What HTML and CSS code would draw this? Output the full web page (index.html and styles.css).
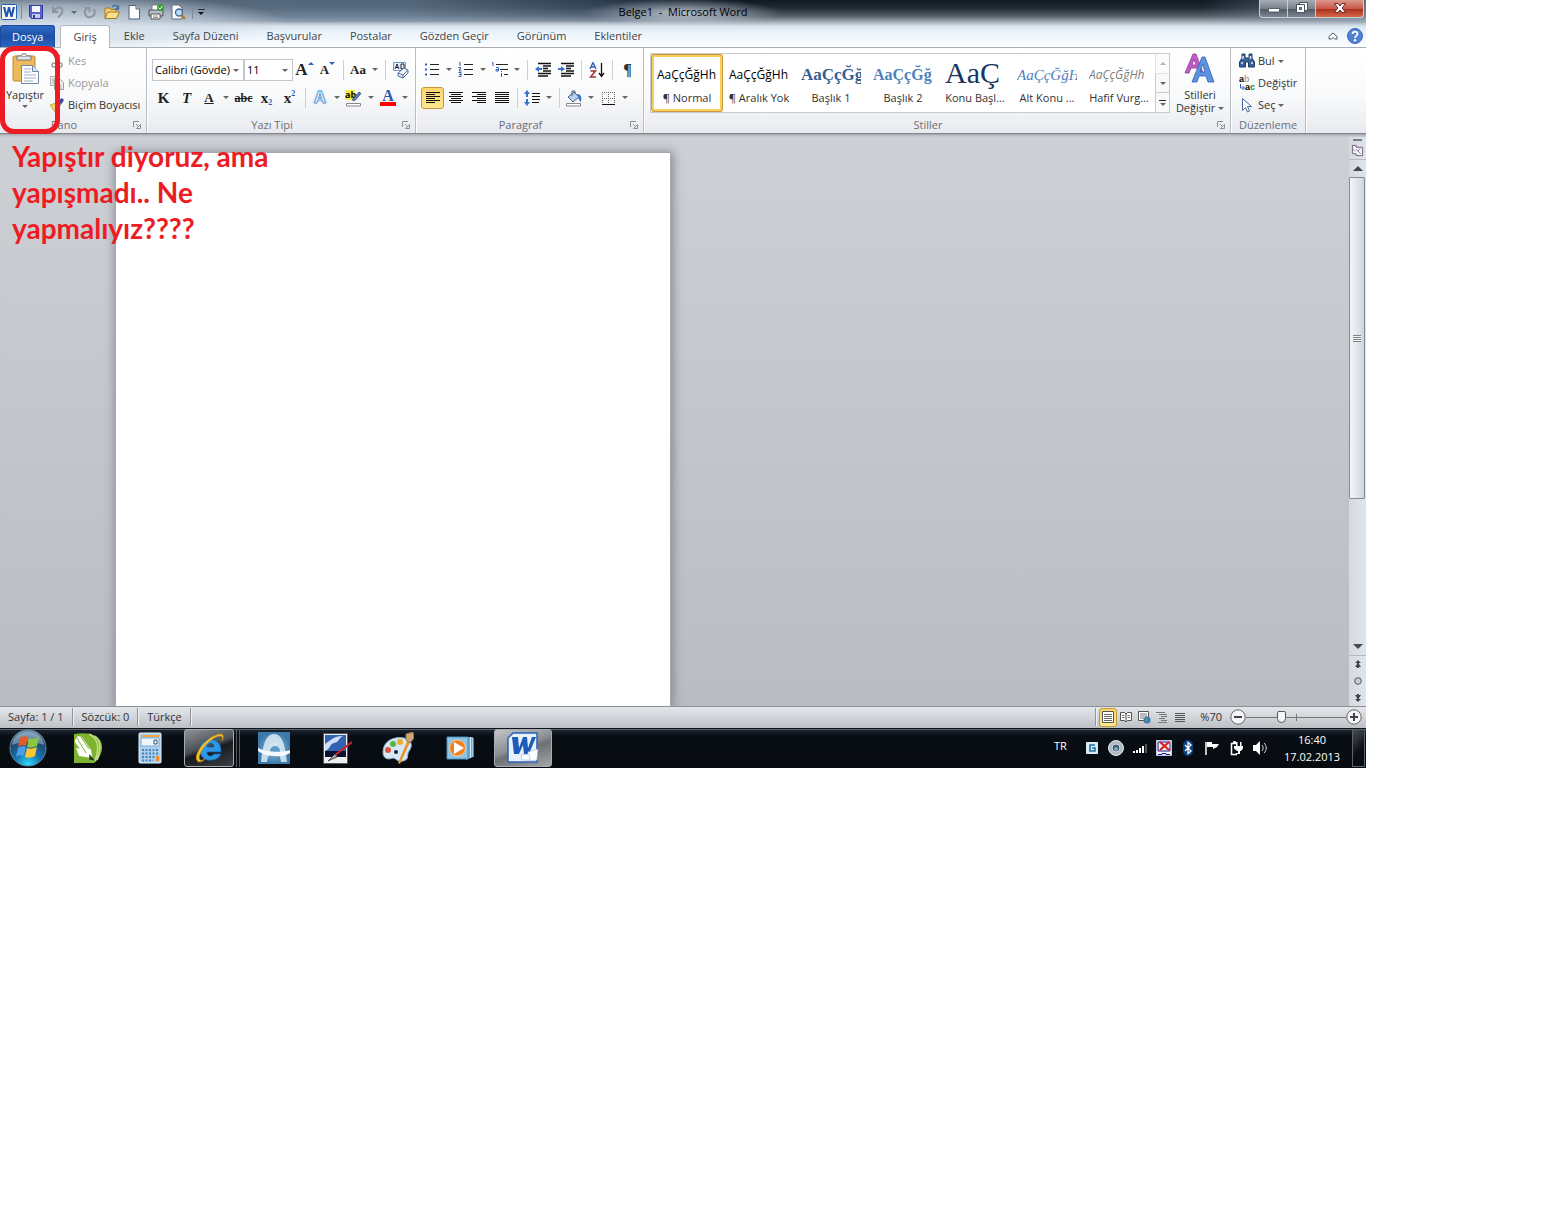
FILE: index.html
```html
<!DOCTYPE html>
<html lang="tr">
<head>
<meta charset="utf-8">
<title>Belge1 - Microsoft Word</title>
<link rel="stylesheet" href="styles.css">
</head>
<body>
<div class="desktop">
  <header class="chrome">
    <div class="titlebar">
      <div class="quick">
        <svg class="i18" viewBox="0 0 18 18"><rect x="1.500" y="1.500" width="15" height="15" rx="1" fill="#f4f8fd" stroke="#2a5ea8"/><path d="M3 4l2.500 10h2L9 8l1.500 6h2L15 4h-2.200l-1.400 6L10 4H8l-1.400 6L5.300 4z" fill="#1b57a8"/></svg>
        <span class="qsep"></span>
        <button class="qb" aria-label="Kaydet"><svg class="i16" viewBox="0 0 16 16"><path d="M1.500 1.500h13v13h-11l-2-2z" fill="#5b62c6" stroke="#333a9a"/><path d="M4 2h8v6H4z" fill="#f4f6ff"/><path d="M4 10h8v4H4z" fill="#c8cdf0"/><path d="M5 11h2v3H5z" fill="#333a9a"/></svg></button>
        <button class="qb" aria-label="Geri al"><svg class="i16" viewBox="0 0 16 16"><path d="M3 3v5h5M3.500 7.500C6 2.500 12 2.500 12.500 6.500c0 3-2 5-4.500 7" fill="none" stroke="#8b949e" stroke-width="2"/></svg></button>
        <button class="qarrow" aria-label="Geri al seçenekleri"><i class="arr"></i></button>
        <button class="qb" aria-label="Yinele"><svg class="i16" viewBox="0 0 16 16"><path d="M4.500 4.500A5 5 0 1 0 11.500 5M3 4h4.500v4" fill="none" stroke="#8b949e" stroke-width="2"/></svg></button>
        <button class="qb" aria-label="Aç"><svg class="i16" viewBox="0 0 16 16"><path d="M1 14V4h5l1 1.500h5V8" fill="#f3cd6b" stroke="#a87a1c"/><path d="M1 14.500L4 8h11.500l-3 6.500z" fill="#fbe08c" stroke="#a87a1c"/><path d="M8 3c2-2.500 5-2 6 1M14.500 1.500V5H11" fill="none" stroke="#3a68ac" stroke-width="1.300"/></svg></button>
        <button class="qb" aria-label="Yeni"><svg class="i16" viewBox="0 0 16 16"><path d="M3 1.500h7l3.500 3.500v10H3z" fill="#fff" stroke="#4c5f78"/><path d="M10 1.500V5h3.500" fill="#cdd8e6" stroke="#4c5f78"/></svg></button>
        <button class="qb" aria-label="Hızlı yazdır"><svg class="i16" viewBox="0 0 16 16"><path d="M4 1h7v6H4z" fill="#fff" stroke="#777"/><path d="M1 6h14v6H1z" fill="#b9bcc3" stroke="#4a4d54"/><path d="M3 10h9v5H3z" fill="#fff" stroke="#555"/><path d="M5 12h5M5 13.500h5" stroke="#999"/><circle cx="12.500" cy="3.500" r="3.500" fill="#35a035"/><path d="M10.500 3.500l1.500 1.500 2.500-3" fill="none" stroke="#fff"/></svg></button>
        <button class="qb" aria-label="Baskı önizleme"><svg class="i16" viewBox="0 0 16 16"><path d="M2 1h7l3 3v11H2z" fill="#fff" stroke="#5c6c80"/><circle cx="9" cy="8.500" r="3.500" fill="#b8dcf4" stroke="#3d6696" stroke-width="1.300"/><path d="M11.500 11l3.500 4" stroke="#b57a28" stroke-width="2.400"/></svg></button>
        <span class="qsep"></span>
        <button class="qarrow custom" aria-label="Özelleştir"><i class="bar"></i><i class="arr dark"></i></button>
      </div>
      <h1 class="title">Belge1 &nbsp;-&nbsp; Microsoft Word</h1>
      <div class="wincontrols">
        <button class="wc min" aria-label="Simge durumuna küçült"><svg viewBox="0 0 14 12"><rect x="1.500" y="6.500" width="11" height="3.500" fill="#fff" stroke="#59626d"/></svg></button>
        <button class="wc max" aria-label="Geri yükle"><svg viewBox="0 0 14 12"><path d="M4.500.5h8v8h-8z" fill="#fff" stroke="#4a525c"/><path d="M1.500 2.500h8v8h-8z" fill="#fff" stroke="#4a525c"/><path d="M4.500 5.500h2v2h-2z" fill="#8f99a5" stroke="#4a525c"/></svg></button>
        <button class="wc close" aria-label="Kapat"><svg viewBox="0 0 14 12"><path d="M1.500 1.500h3.500l2 2.500 2-2.500h3.500L9.200 6l3.300 4.500H9L7 8l-2 2.500H1.500L4.800 6z" fill="#fff" stroke="#6b2a26"/></svg></button>
      </div>
    </div>
    <nav class="tabs">
      <button class="tab file">Dosya</button>
      <button class="tab active">Giriş</button>
      <button class="tab">Ekle</button>
      <button class="tab">Sayfa Düzeni</button>
      <button class="tab">Başvurular</button>
      <button class="tab">Postalar</button>
      <button class="tab">Gözden Geçir</button>
      <button class="tab">Görünüm</button>
      <button class="tab">Eklentiler</button>
      <span class="grow"></span>
      <button class="qb" aria-label="Şeridi küçült"><svg class="i16" viewBox="0 0 16 16"><path d="M4 8.500L8 5l4 3.500v2.500H9.500L8 9.500 6.500 11H4z" fill="#fff" stroke="#4c5663"/></svg></button>
      <button class="qb" aria-label="Yardım"><svg class="i16" viewBox="0 0 16 16"><circle cx="8" cy="8" r="7.500" fill="#4f82d0" stroke="#3a68b5"/><path d="M5.500 6C5.500 2.800 10.500 2.800 10.500 6 10.500 7.800 8 8 8 10" fill="none" stroke="#fff" stroke-width="1.800"/><circle cx="8" cy="12.300" r="1.200" fill="#fff"/></svg></button>
    </nav>
  </header>

  <div class="ribbon">
    <section class="group clip">
      <div class="body">
        <button class="big paste">
          <svg class="i32" viewBox="0 0 32 32"><rect x="4" y="3" width="22" height="25" rx="1.500" fill="#ecba5c" stroke="#c08a30"/><path d="M8 3h14v4H8z" fill="#e4e6ea" stroke="#777"/><path d="M12 3c0-3 6-3 6 0" fill="#fff" stroke="#777"/><path d="M12.500 12.500h11l6 6v12h-17z" fill="#fff" stroke="#6f86a5"/><path d="M23.500 12.500v6h6" fill="#dce6f2" stroke="#6f86a5"/><path d="M15 16h7M15 19h7M15 22h12M15 25h12M15 28h9" stroke="#9aabc2"/></svg>
          <span>Yapıştır</span><i class="arr"></i>
        </button>
        <div class="stack">
          <button class="line off"><svg class="i14" viewBox="0 0 14 14"><path d="M4 1l4 8M10 1L6 9" stroke="#aaa" stroke-width="1.500"/><circle cx="4" cy="11" r="2" fill="none" stroke="#999" stroke-width="1.500"/><circle cx="10" cy="11" r="2" fill="none" stroke="#999" stroke-width="1.500"/></svg>Kes</button>
          <button class="line off"><svg class="i14" viewBox="0 0 14 14"><path d="M.5.5h8v9h-8z" fill="#eee" stroke="#aaa"/><path d="M2 3h4M2 5h3M2 7h3" stroke="#aaa"/><path d="M4.500 3.500h6l3 3v7h-9z" fill="#f6f6f6" stroke="#999"/><path d="M6 8h5M6 10h6M6 12h6" stroke="#aaa"/></svg>Kopyala</button>
          <button class="line"><svg class="i14" viewBox="0 0 14 14"><path d="M0 7l6-2 3 4-4 5z" fill="#f2d66b" stroke="#b8962d" stroke-width=".8"/><path d="M6 5l2-2 3 3-2 3z" fill="#ddd" stroke="#666" stroke-width=".8"/><path d="M8 3l4-3 2 2-2.500 4z" fill="#4046a0"/></svg>Biçim Boyacısı</button>
        </div>
      </div>
      <footer><span>Pano</span><svg class="launch" viewBox="0 0 8 8"><path d="M.5 6V.5H6M7.500 3.500v4h-4zM3 3l3 3" fill="none" stroke="#8d9197"/></svg></footer>
    </section>

    <section class="group font">
      <div class="body rows">
        <div class="row">
          <label class="combo name"><select aria-label="Yazı tipi"><option>Calibri (Gövde)</option></select><i class="arr"></i></label>
          <label class="combo size"><select aria-label="Yazı tipi boyutu"><option>11</option></select><i class="arr"></i></label>
          <button class="ib serif s17" aria-label="Büyüt">A<i class="up"></i></button>
          <button class="ib serif s13" aria-label="Küçült">A<i class="down"></i></button>
          <span class="sep"></span>
          <button class="split serif s13"><span>Aa</span><i class="arr"></i></button>
          <span class="sep"></span>
          <button class="ib" aria-label="Biçimlendirmeyi temizle"><svg class="i18" viewBox="0 0 18 18"><path d="M1.500 1.500h12v8h-12z" fill="#e8f0fa" stroke="#7796c4"/><path d="M3 8l2-5 2 5M4 6.500h2M9 3v5h3V3z" fill="none" stroke="#223"/><path d="M6 12l6-5 4 2v3l-5 5-5-2z" fill="#f2f5fa" stroke="#4f6e9f"/><path d="M6 12l5 2 5-5M11 14v3" fill="none" stroke="#4f6e9f"/></svg></button>
        </div>
        <div class="row">
          <button class="ib serif s14">K</button>
          <button class="ib serif s14 it">T</button>
          <button class="split serif s13"><u>A</u><i class="arr"></i></button>
          <button class="ib serif s12 strike">abc</button>
          <button class="ib serif s14">x<sub>2</sub></button>
          <button class="ib serif s14">x<sup>2</sup></button>
          <span class="sep"></span>
          <button class="split" aria-label="Metin efektleri"><span class="glow">A</span><i class="arr"></i></button>
          <button class="split" aria-label="Vurgu rengi"><svg class="i18" viewBox="0 0 18 18"><rect width="10" height="10" y="1" fill="#f7f03a"/><text x="0" y="9" class="ab">ab</text><path d="M7 11l7-8 2 1.500-6 7z" fill="#5d84bd" stroke="#2d4d80" stroke-width=".8"/><path d="M1.500 14.500h14v2.500h-14z" fill="#fff" stroke="#888"/></svg><i class="arr"></i></button>
          <button class="split" aria-label="Yazı tipi rengi"><span class="acolor">A</span><i class="arr"></i></button>
        </div>
      </div>
      <footer><span>Yazı Tipi</span><svg class="launch" viewBox="0 0 8 8"><path d="M.5 6V.5H6M7.500 3.500v4h-4zM3 3l3 3" fill="none" stroke="#8d9197"/></svg></footer>
    </section>

    <section class="group para">
      <div class="body rows">
        <div class="row">
          <button class="split" aria-label="Madde işaretleri"><svg class="i16" viewBox="0 0 16 16"><path d="M6 2.500h9M6 7.500h9M6 12.500h9" stroke="#222"/><path d="M1 1.500h2v2H1zM1 6.500h2v2H1zM1 11.500h2v2H1z" fill="#2f5fc0"/></svg><i class="arr"></i></button>
          <button class="split" aria-label="Numaralandırma"><svg class="i16" viewBox="0 0 16 16"><path d="M6 2.500h9M6 7.500h9M6 12.500h9" stroke="#222"/><path d="M1 .5h1V4M.5 5.500h2v1.500h-1V9h2M.5 10.500h2.500v4H.5M1 12.500h2" fill="none" stroke="#2f5fc0"/></svg><i class="arr"></i></button>
          <button class="split" aria-label="Çok düzeyli liste"><svg class="i18" viewBox="0 0 18 18"><path d="M5 3.500h12M9 8.500h8M13 13.500h4" stroke="#222"/><path d="M1 1.500h1V5M5 6.500h2.500v3.500H5V8.500h2M10.500 12v4M10.500 10v1" fill="none" stroke="#2f5fc0"/></svg><i class="arr"></i></button>
          <span class="sep"></span>
          <button class="ib" aria-label="Girintiyi azalt"><svg class="i16" viewBox="0 0 16 16"><path d="M3 1.500h13M8 4h8M8 6.500h5M8 9h8M3 11.500h13M3 14h10" stroke="#111" stroke-width="1.300"/><path d="M0 7l4-3v2h3v2H4v2z" fill="#3b72cf"/></svg></button>
          <button class="ib" aria-label="Girintiyi artır"><svg class="i16" viewBox="0 0 16 16"><path d="M3 1.500h13M8 4h8M8 6.500h5M8 9h8M3 11.500h13M3 14h10" stroke="#111" stroke-width="1.300"/><path d="M7 7L3 4v2H0v2h3v2z" fill="#3b72cf"/></svg></button>
          <span class="sep"></span>
          <button class="ib" aria-label="Sırala"><svg class="i16" viewBox="0 0 16 16"><path d="M1 7l3-6.500L7 7M2 5h4" fill="none" stroke="#3560b5" stroke-width="1.400"/><path d="M1.500 9h5l-5 6h5.500" fill="none" stroke="#9c3238" stroke-width="1.500"/><path d="M12.500 1v13M10 11l2.500 3.500L15 11" fill="none" stroke="#111" stroke-width="1.300"/></svg></button>
          <span class="sep"></span>
          <button class="ib pil">¶</button>
        </div>
        <div class="row">
          <button class="ib on" aria-label="Sola hizala"><svg class="i16" viewBox="0 0 16 16"><path d="M1 2.500h14M1 4.500h9M1 6.500h14M1 8.500h9M1 10.500h14M1 12.500h9" stroke="#111"/></svg></button>
          <button class="ib" aria-label="Ortala"><svg class="i16" viewBox="0 0 16 16"><path d="M1 2.500h14M3 4.500h10M1 6.500h14M3 8.500h10M1 10.500h14M3 12.500h10" stroke="#111"/></svg></button>
          <button class="ib" aria-label="Sağa hizala"><svg class="i16" viewBox="0 0 16 16"><path d="M1 2.500h14M6 4.500h9M1 6.500h14M6 8.500h9M1 10.500h14M6 12.500h9" stroke="#111"/></svg></button>
          <button class="ib" aria-label="İki yana yasla"><svg class="i16" viewBox="0 0 16 16"><path d="M1 2.500h14M1 4.500h14M1 6.500h14M1 8.500h14M1 10.500h14M1 12.500h14" stroke="#111"/></svg></button>
          <span class="sep"></span>
          <button class="split" aria-label="Satır aralığı"><svg class="i16" viewBox="0 0 16 16"><path d="M8 3.500h8M8 6.500h8M8 9.500h8M8 12.500h7" stroke="#111"/><path d="M3 0l3 4H4v8h2l-3 4-3-4h2V4H0z" fill="#3b72cf"/><path d="M0 7h6v2H0z" fill="#f8f9fb"/></svg><i class="arr"></i></button>
          <span class="sep"></span>
          <button class="split" aria-label="Gölgelendirme"><svg class="i18" viewBox="0 0 18 18"><path d="M3 8l6-5 5 5-6 5z" fill="#b9cdea" stroke="#4a6188"/><path d="M7 7V2h3v3" fill="none" stroke="#4a6188"/><path d="M12 5c4 0 5 3 4 8-2-1-2-3-4-8z" fill="#3b72cf"/><path d="M1.500 14.500h14v2.500h-14z" fill="#fff" stroke="#888"/></svg><i class="arr"></i></button>
          <button class="split" aria-label="Kenarlıklar"><svg class="i16" viewBox="0 0 16 16"><path d="M2.500 2v12M8.500 2v12M14.500 2v12M2 2.500h13M2 8.500h13" stroke="#666" stroke-dasharray="1 1"/><path d="M2 14.500h13" stroke="#111"/></svg><i class="arr"></i></button>
        </div>
      </div>
      <footer><span>Paragraf</span><svg class="launch" viewBox="0 0 8 8"><path d="M.5 6V.5H6M7.500 3.500v4h-4zM3 3l3 3" fill="none" stroke="#8d9197"/></svg></footer>
    </section>

    <section class="group styles">
      <div class="body">
        <div class="gallery">
          <button class="style sel"><span class="pv">AaÇçĞğHh</span><span>¶ Normal</span></button>
          <button class="style"><span class="pv">AaÇçĞğHh</span><span>¶ Aralık Yok</span></button>
          <button class="style"><span class="pv h1">AaÇçĞğ</span><span>Başlık 1</span></button>
          <button class="style"><span class="pv h2">AaÇçĞğ</span><span>Başlık 2</span></button>
          <button class="style"><span class="pv ttl">AaÇ</span><span>Konu Başl...</span></button>
          <button class="style"><span class="pv sub">AaÇçĞğH</span><span>Alt Konu ...</span></button>
          <button class="style"><span class="pv soft">AaÇçĞğHh</span><span>Hafif Vurg...</span></button>
          <div class="gscroll">
            <button aria-label="Yukarı" disabled><i class="arr flip"></i></button>
            <button aria-label="Aşağı"><i class="arr"></i></button>
            <button aria-label="Diğer"><i class="bar"></i><i class="arr"></i></button>
          </div>
        </div>
        <button class="big change">
          <svg class="i32" viewBox="0 0 32 32"><path d="M1 20L9 1h3l7 19h-4l-2-5H7l-2 5zM8 12h4l-2-6z" fill="#c05cc6" stroke="#8f3a98" stroke-width=".8"/><path d="M8 29l10-25h3l9 25h-6l-2-6h-7l-2 6zM16 19h5l-2.500-8z" fill="#5c94e0" stroke="#2d5fae" stroke-width=".8"/></svg>
          <span class="two">Stilleri<br>Değiştir <i class="arr"></i></span>
        </button>
      </div>
      <footer><span>Stiller</span><svg class="launch" viewBox="0 0 8 8"><path d="M.5 6V.5H6M7.500 3.500v4h-4zM3 3l3 3" fill="none" stroke="#8d9197"/></svg></footer>
    </section>

    <section class="group edit">
      <div class="body">
        <div class="stack">
          <button class="line"><svg class="i16" viewBox="0 0 16 16"><path d="M3 1h3v4h4V1h3v4l2.500 4v5H9.500V9h-3v5H.5V9L3 5z" fill="#3a6299" stroke="#1f3c68"/><path d="M2 10h2M12 10h2M4 3v3M11.500 3v3" stroke="#dfeafa" stroke-width="1.500"/></svg>Bul <i class="arr"></i></button>
          <button class="line"><svg class="i16" viewBox="0 0 16 16"><text x="0" y="7" class="rep">a<tspan fill="#aaa">b</tspan></text><text x="6" y="15" class="rep">a<tspan fill="#158a2a">c</tspan></text><path d="M1.500 9v4H5M3.500 11l2 2-2 2" fill="none" stroke="#2f5fb0"/></svg>Değiştir</button>
          <button class="line"><svg class="i16" viewBox="0 0 16 16"><path d="M3.500 1.500v12l3-3 2 4.500 2-1-2-4.500h4z" fill="#fff" stroke="#48679b"/></svg>Seç <i class="arr"></i></button>
        </div>
      </div>
      <footer><span>Düzenleme</span></footer>
    </section>
    <div class="mark"></div>
  </div>

  <main class="workspace">
    <article class="paper"></article>
    <p class="note">Yapıştır diyoruz, ama<br>yapışmadı.. Ne<br>yapmalıyız????</p>
    <aside class="vscroll">
      <i class="splitter"></i>
      <button class="vb ruler" aria-label="Cetvel"><svg class="i14" viewBox="0 0 14 14"><path d="M1.500 1.500h4v2h7v9h-7v-2h-4z" fill="#f5eff8" stroke="#66607a"/><path d="M5.500 5.500l5 5M10 5l-3 3M1.500 5l3 3" stroke="#8b8599"/></svg></button>
      <button class="vb" aria-label="Yukarı kaydır"><i class="tri flip"></i></button>
      <div class="thumb"><i class="grip"></i></div>
      <span class="grow"></span>
      <button class="vb" aria-label="Aşağı kaydır"><i class="tri"></i></button>
      <button class="vb nav first" aria-label="Önceki sayfa"><svg viewBox="0 0 8 8"><path d="M4 0l3 3H5v1l2 3H5v1H3V7H1l2-3V3H1z" fill="#444"/></svg></button>
      <button class="vb nav" aria-label="Nesne seç"><svg viewBox="0 0 8 8"><circle cx="4" cy="4" r="3.300" fill="#c9ccd2" stroke="#555"/></svg></button>
      <button class="vb nav" aria-label="Sonraki sayfa"><svg viewBox="0 0 8 8"><path d="M4 8L1 5h2V4L1 1h2V0h2v1h2L5 4v1h2z" fill="#444"/></svg></button>
    </aside>
  </main>

  <div class="status">
    <span class="cell">Sayfa: 1 / 1</span><span class="cell">Sözcük: 0</span><span class="cell">Türkçe</span>
    <span class="grow"></span>
    <span class="cell empty"></span>
    <button class="view on" aria-label="Sayfa düzeni"><svg class="i14" viewBox="0 0 14 14"><path d="M1.500 1.500h11v11h-11z" fill="#fff" stroke="#555"/><path d="M3 4.500h8M3 6.500h8M3 8.500h8M3 10.500h8" stroke="#666"/></svg></button>
    <button class="view" aria-label="Tam ekran okuma"><svg class="i14" viewBox="0 0 14 14"><path d="M1.500 2.500h4L7 4l1.500-1.500h4v8h-4L7 12l-1.500-1.500h-4zM7 4v8" fill="#fff" stroke="#555"/><path d="M3 5.500h2.500M3 7.500h2.500M8.500 5.500H11M8.500 7.500H11" stroke="#777"/></svg></button>
    <button class="view" aria-label="Web düzeni"><svg class="i14" viewBox="0 0 14 14"><path d="M1.500 1.500h10v9h-10z" fill="#fff" stroke="#555"/><path d="M3 4h7M3 6h7M3 8h4" stroke="#777"/><circle cx="10" cy="10" r="3.500" fill="#3f78b8"/><path d="M8 8l3 1-1 3z" fill="#5bb05b"/></svg></button>
    <button class="view" aria-label="Anahat"><svg class="i14" viewBox="0 0 14 14"><path d="M1 2.500h9M4 4.500h8M6 6.500h6M4 8.500h6M6 10.500h6M3 12.500h9" stroke="#777"/></svg></button>
    <button class="view" aria-label="Taslak"><svg class="i14" viewBox="0 0 14 14"><path d="M2 3.500h10M2 5.500h10M2 7.500h10M2 9.500h10M2 11.500h10" stroke="#555"/></svg></button>
    <span class="pct">%70</span>
    <button class="zb" aria-label="Uzaklaştır"><svg class="i16" viewBox="0 0 16 16"><circle cx="8" cy="8" r="7.200" fill="#f4f5f7" stroke="#666"/><path d="M4 8h8" stroke="#444" stroke-width="2"/></svg></button>
    <input class="zoom" type="range" min="10" max="100" value="41" aria-label="Yakınlaştırma">
    <button class="zb" aria-label="Yakınlaştır"><svg class="i16" viewBox="0 0 16 16"><circle cx="8" cy="8" r="7.200" fill="#f4f5f7" stroke="#666"/><path d="M4 8h8M8 4v8" stroke="#444" stroke-width="2"/></svg></button>
  </div>

  <div class="taskbar">
    <button class="slot start" aria-label="Başlat"><svg class="i38" viewBox="0 0 38 38"><defs><radialGradient id="orb" cx=".5" cy=".95" r=".9"><stop offset="0" stop-color="#2fd8f8"/><stop offset=".4" stop-color="#1872b0"/><stop offset=".8" stop-color="#1e4468"/><stop offset="1" stop-color="#6d8fa8"/></radialGradient></defs><circle cx="19" cy="19" r="18" fill="url(#orb)" stroke="#5f87a5"/><path d="M3 16C5 -1 33 -1 35 16 25 12 13 12 3 16z" fill="#c4dae9" opacity=".45"/><path d="M11 9c3-2 5-2 8-1l-2 9c-3-1-5-1-8 1z" fill="#e8592a"/><path d="M20 9c3 1 6 1 10-1l-2 9c-4 2-7 2-10 1z" fill="#8cc63e"/><path d="M9 19c3-2 5-2 8-1l-2 9c-3-1-5-1-8 1z" fill="#4a9ee8"/><path d="M18 19c3 1 6 1 10-1l-2 9c-4 2-7 2-10 1z" fill="#fdc72f"/></svg></button>
    <button class="slot" aria-label="CorelDRAW"><svg class="i32" viewBox="0 0 32 32"><path d="M2 2c20-3 29 4 28 15-1 7-5 12-8 14H2z" fill="#7db32f"/><path d="M17 2c9 4 11 14 6 27M23 4c6 5 6 14 2 24" stroke="#c3e08a" fill="none" stroke-width="1.500"/><path d="M3 8l3-4 4 1 9 13 1 8-8-3L3 10z" fill="#fff"/><path d="M4 16l3 8 13 2-1-7z" fill="#fff"/><path d="M5 6l9 15M9 5l8 12" stroke="#7db32f"/><path d="M18 24l3 3.500-3-.5z" fill="#333" stroke="#333" stroke-width="1.500"/></svg></button>
    <button class="slot" aria-label="Hesap Makinesi"><svg class="i32" viewBox="0 0 32 32"><rect x="5" y="1" width="22" height="30" rx="1" fill="#a9d0ee" stroke="#e3f1fb"/><path d="M7 3h18v2H7z" fill="#f2a547"/><path d="M7 6h18v8H7z" fill="#eef6fd" stroke="#7fa9cc"/><path d="M20 8h3v4h-3z" fill="none" stroke="#356"/><path d="M8 18h16M8 21.500h16M8 25h16M8 28.500h11" stroke="#4d81b3" stroke-width="2" stroke-dasharray="2 1.500"/><path d="M22 24h3v5h-3z" fill="#f08c28"/></svg></button>
    <div class="slot"><button class="running ie" aria-label="Internet Explorer"><svg class="i32" viewBox="0 0 32 32"><path d="M28 18C28 4 7 4 7 18c0 13 17 13 21 4h-7c-2 3-7 3-7-2h14zM14 15c0-5 7-5 7 0z" fill="#2d97e6" stroke="#0c5fa8" stroke-width=".7" fill-rule="evenodd"/><path d="M6 30C-3 27 12 4 27 2c4 0 4 3 2 7 1-4 0-5-2-5C16 5 3 24 7 28c1 1 3 0 5-1-2 2-4 3-6 3z" fill="#f5c22d" stroke="#c48b12" stroke-width=".6"/></svg></button><i class="pile"></i><i class="pile"></i></div>
    <button class="slot" aria-label="Tarayıcı"><svg class="i32" viewBox="0 0 32 32"><defs><radialGradient id="sky"><stop offset="0" stop-color="#9cc9e4"/><stop offset="1" stop-color="#3a79aa"/></radialGradient></defs><path d="M0 0h32v32H0z" fill="url(#sky)"/><path d="M3 30C5 10 9 2 16 2s11 8 13 28h-6c-1-7-3-10-7-10s-6 3-7 10z" fill="#dcebf5" opacity=".85"/><circle cx="17" cy="19" r="5" fill="#5e9cc6"/><path d="M0 16c7 4 24 5 32 2v3c-8 5-24 4-32-2z" fill="#f6fafd"/></svg></button>
    <button class="slot" aria-label="Resim Düzenleyici"><svg class="i32" viewBox="0 0 32 32"><path d="M3.500 1.500h24v30h-24z" fill="#eee" stroke="#555"/><path d="M5 3h21v22H5z" fill="#3462b0"/><path d="M5 12c5-3 8-8 18-8-5 3-4 6-9 7s-3 6-9 8z" fill="#cfe0f6"/><path d="M5 19h21v6H5z" fill="#0b1030"/><path d="M32 10L14 24" stroke="#c22" stroke-width="2"/><path d="M15 22l-7 7 9-4z" fill="#aaa" stroke="#555"/></svg></button>
    <button class="slot" aria-label="Paint"><svg class="i32" viewBox="0 0 32 32"><path d="M1 20C1 9 12 4 22 6c8 2 9 8 5 13-3 5 1 8-6 10-5 2-7-3-10-3-5 2-10 1-10-6z" fill="#d5e9f5" stroke="#8ab0c8"/><circle cx="6" cy="18" r="3" fill="#e2543f"/><circle cx="11" cy="12" r="3" fill="#5ab53c"/><circle cx="18" cy="10" r="3" fill="#f0ac20"/><circle cx="14" cy="20" r="2" fill="#123"/><path d="M26 7l3 1-11 24-2-1z" fill="#e89332"/><path d="M24 2l7-2 1 6-4 5-4-3z" fill="#cda678" stroke="#9c7548"/></svg></button>
    <button class="slot" aria-label="Media Player"><svg class="i32" viewBox="0 0 32 32"><path d="M22 5h7v20l-7 3z" fill="#68aed2"/><path d="M3 5h21v22H3z" fill="#8cc5e2" stroke="#4a8fb5"/><path d="M26.500 5v21M29 6v19" stroke="#d2eaf6"/><circle cx="13.500" cy="16" r="8" fill="#f1801f" stroke="#fbc898"/><path d="M10 10l10 6-10 6z" fill="#fff"/></svg></button>
    <div class="slot"><button class="running word" aria-label="Microsoft Word"><svg class="i32" viewBox="0 0 32 32"><path d="M6 1h24v29H1V6z" fill="#e9f1fb" stroke="#2a62b5" stroke-width="1.500"/><path d="M5 5h6l1 11 4-11h4l1 11 4-11h4l-7 17h-5l-1-9-4 9H7z" fill="#1d5cb8"/><path d="M21 20l10-3-1 11-9 1z" fill="#fff" stroke="#9db5d3" stroke-width=".6"/><path d="M14 23l8-1 1 6h-8z" fill="#fff" stroke="#9db5d3" stroke-width=".6"/></svg></button></div>
    <span class="grow"></span>
    <span class="lang">TR</span>
    <div class="tray">
      <svg class="i16" viewBox="0 0 16 16"><rect x="2" y="2" width="12" height="12" rx="1" fill="#d8ecf8"/><path d="M11 5H6v6h5V8H8" fill="none" stroke="#24729f" stroke-width="1.600"/></svg>
      <svg class="i16" viewBox="0 0 16 16"><circle cx="8" cy="8" r="7.500" fill="#aebbc4" stroke="#e3eaef"/><circle cx="8" cy="8" r="4" fill="#40596c" stroke="#d5dde3"/><circle cx="8" cy="9" r="2" fill="#84a8c1"/></svg>
      <svg class="i16" viewBox="0 0 16 16"><path d="M1 11h2v2H1zM4 10h2v3H4zM7 8h2v5H7zM10 6h2v7h-2z" fill="#fff"/><path d="M13 4h2v9h-2z" fill="#555"/></svg>
      <svg class="i16" viewBox="0 0 16 16"><path d="M.5.5h15v15H.500z" fill="#f4f4fb" stroke="#c9c9e8"/><path d="M2 2h12v9H2z" fill="#eee" stroke="#1c1c8e"/><path d="M4 2l9 8M13 2L4 10" stroke="#e01b1b" stroke-width="2"/><path d="M2 14.500h4v-1h4v1h4" stroke="#1c1c8e" fill="none"/></svg>
      <svg class="i16" viewBox="0 0 16 16"><rect x="3" width="10" height="16" rx="5" fill="#0b3f84"/><path d="M5 5l6 6-3 2.500v-11L11 5l-6 6" fill="none" stroke="#fff" stroke-width="1.300"/></svg>
      <svg class="i16" viewBox="0 0 16 16"><path d="M2 2v13" stroke="#fff" stroke-width="1.500"/><path d="M3 2h5v2h7l-2 3-4 2V7H3z" fill="#fff"/></svg>
      <svg class="i16" viewBox="0 0 16 16"><path d="M8 3.500H3.500v11H9M5 2h3" fill="none" stroke="#fff" stroke-width="1.500"/><path d="M6 6h9v2.500L13 11h-4L6 8.500zM8 2h1.500v4H8zM12 2h1.500v4H12zM10 11h2v3H8v-1h2z" fill="#fff"/></svg>
      <svg class="i16" viewBox="0 0 16 16"><path d="M1 5h3l4-4v14l-4-4H1z" fill="#fff"/><path d="M10 5c1.500 2 1.500 4 0 6M12 3c3 3 3 7 0 10" fill="none" stroke="#ddd"/></svg>
    </div>
    <div class="clock"><span>16:40</span><span>17.02.2013</span></div>
    <button class="peek" aria-label="Masaüstünü göster"></button>
  </div>
</div>
</body>
</html>
```
FILE: styles.css
```css
* { box-sizing: border-box; }
body {
  margin: 0;
  background: #fff;
  font: 11px/14px "Open Sans", "Noto Sans", sans-serif;
  color: #333;
}
button, select {
  font: inherit;
  color: inherit;
  border: 0;
  padding: 0;
  margin: 0;
  background: none;
  white-space: nowrap;
}
svg { display: block; flex: none; }
.desktop { width: 100%; max-width: 1366px; }
.grow { flex: 1; }
.i14 { width: 14px; height: 14px; }
.i16 { width: 16px; height: 16px; }
.i18 { width: 18px; height: 18px; }
.i32 { width: 32px; height: 32px; }
.i38 { width: 38px; height: 38px; }
.arr {
  display: inline-block;
  flex: none;
  border: 3px solid transparent;
  border-top-color: #666;
  border-bottom: 0;
}
.arr.dark { border-top-color: #111; }
.arr.flip { transform: rotate(180deg); }

/* title bar and tabs share one glass background */
.chrome {
  background:
    radial-gradient(ellipse 100px 14px at 50% 13px, rgba(205, 215, 225, .8), transparent),
    radial-gradient(ellipse 230px 30px at 60px 24px, rgba(215, 225, 234, .9), rgba(205, 217, 228, .6) 60%, transparent),
    linear-gradient(to right, rgba(130, 155, 180, .6), rgba(125, 150, 175, .6) 30%, rgba(90, 120, 150, .35) 45%, transparent 55%, transparent 88%, rgba(150, 170, 190, .6)) 0 0 / 100% 22px no-repeat,
    linear-gradient(#101822, #222a35 8px, #555d67 16px, #a3acb6 22px, #d8e3ee 26px, #e9f3fc 32px, #fdfeff 47px);
  border-bottom: 1px solid #a8adb5;
}
.titlebar {
  display: grid;
  grid-template-columns: 1fr auto 1fr;
  height: 24px;
}
.quick { display: flex; align-items: center; }
.qsep { width: 1px; height: 14px; margin: 0 3px; background: #7c8a99; }
.qb { width: 22px; display: grid; place-items: center; }
.qarrow { width: 10px; display: grid; place-items: center; gap: 2px; }
.bar { width: 7px; height: 1px; background: #333; }
.title { margin: 0; font-size: 11px; line-height: 24px; font-weight: 400; color: #000; }
.wincontrols { display: flex; justify-self: end; margin-right: 2px; }
.wc {
  width: 28px;
  height: 18px;
  padding-bottom: 1px;
  display: grid;
  place-items: center;
  border: 1px solid #c8ced6;
  border-top: 0;
  border-right-width: 0;
  background: linear-gradient(#a5acb5, #7a828c 50%, #4e5661 51%, #7d8792);
}
.wc svg { width: 14px; height: 12px; }
.min { border-bottom-left-radius: 4px; }
.close {
  width: 49px;
  border-right-width: 1px;
  border-bottom-right-radius: 4px;
  background: linear-gradient(#dc9a8c, #c9574a 50%, #a82b1b 51%, #d56a45);
}
.tabs { display: flex; height: 23px; padding-top: 1px; color: #444; }
.tab { padding: 0 14px; }
.file {
  padding: 0 11px;
  margin-right: 5px;
  color: #fff;
  border: 1px solid #1c4a9e;
  border-bottom: 0;
  border-radius: 3px 3px 0 0;
  background: linear-gradient(#2f6ac6, #1d4fa8 50%, #2a66c2);
}
.tab.active {
  padding: 0 12px;
  margin-bottom: -1px;
  background: #fff;
  border: 1px solid #b4b9c1;
  border-bottom: 0;
  border-radius: 3px 3px 0 0;
}

/* ribbon */
.ribbon {
  position: relative;
  display: flex;
  height: 86px;
  background: linear-gradient(#fff, #f9fafb 55%, #e8eaef);
  border-bottom: 1px solid #83878d;
}
.group {
  display: flex;
  flex-direction: column;
  border-right: 1px solid #b9bec6;
  box-shadow: 1px 0 #fff;
}
.clip { width: 147px; }
.font { width: 269px; }
.para { width: 228px; }
.styles { flex: 0 1 587px; min-width: 0; }
.edit { width: 75px; }
.body { flex: 1; display: flex; }
.group footer {
  display: flex;
  align-items: center;
  height: 16px;
  padding-right: 5px;
  color: #6a6f77;
}
.group footer span { flex: 1; text-align: center; }
.launch { width: 8px; height: 8px; margin-left: 5px; }
.group.edit footer { padding: 0; }
.big { display: flex; flex-direction: column; align-items: center; line-height: 13px; }
.big .i32 { margin-bottom: 3px; }
.paste { width: 50px; padding-top: 5px; }
.paste .arr { margin-top: 4px; }
.stack { display: flex; flex-direction: column; padding-top: 2px; }
.line { display: flex; align-items: center; gap: 4px; height: 22px; }
.off { color: #999; }
.rows { flex-direction: column; padding: 10px 0 0 5px; gap: 5px; }
.row { display: flex; align-items: center; height: 23px; }
.combo {
  position: relative;
  display: block;
  height: 22px;
  border: 1px solid #c3c7cd;
  background: #fff;
}
.combo select {
  appearance: none;
  width: 100%;
  height: 20px;
  padding-left: 2px;
  color: #000;
}
.combo .arr { position: absolute; right: 4px; top: 9px; }
.name { width: 92px; }
.size { width: 49px; }
.ib { width: 23px; height: 22px; display: flex; align-items: center; justify-content: center; }
.split { width: 34px; height: 22px; display: flex; align-items: center; }
.split > :first-child { width: 22px; text-align: center; }
.split .arr { margin-left: 3px; }
.sep { width: 8px; height: 20px; background: linear-gradient(to right, transparent 4px, #ccd0d6 4px, #ccd0d6 5px, transparent 5px); }
.serif { font-family: "Liberation Serif", serif; font-weight: 700; color: #222; }
.s17 { font-size: 17px; }
.s14 { font-size: 15px; }
.s13 { font-size: 13px; }
.s12 { font-size: 12px; }
.it { font-style: italic; }
.strike { text-decoration: line-through; }
.serif sub, .serif sup { font-size: 8px; line-height: 8px; color: #2f5fc0; }
.serif sub { align-self: end; padding-bottom: 2px; }
.serif sup { align-self: start; padding-top: 3px; }
.up, .down { align-self: start; margin-top: 3px; border: 3px solid transparent; }
.up { border-top: 0; border-bottom-color: #3560b5; }
.down { border-bottom: 0; border-top-color: #3560b5; }
.glow {
  font: 700 17px/20px "Liberation Sans", sans-serif;
  color: #fff;
  -webkit-text-stroke: 1px #5f9fd8;
  text-shadow: 0 0 3px #7ab8ea;
}
.acolor {
  font: 700 16px/13px "Liberation Serif", serif;
  color: #2d559f;
  border-bottom: 4px solid #f00;
}
.split .acolor { width: 16px; margin: 0 3px; }
.ab { font: 700 9px "Open Sans", sans-serif; }
.rep { font: 700 9px/8px "Liberation Sans", sans-serif; }
.pil { font: 700 16px/20px "Liberation Serif", serif; }
.on {
  border: 1px solid #c29b34;
  border-radius: 3px;
  background: linear-gradient(#fbd46e, #fde78d);
}
.styles .body { padding: 5px 2px 0 6px; gap: 2px; }
.gallery {
  display: flex;
  height: 60px;
  border: 1px solid #c6c9ce;
  background: #fff;
}
.style {
  width: 72px;
  display: flex;
  flex-direction: column;
  align-items: center;
  border: 3px solid transparent;
}
.style.sel { border-color: #f8cf5c; border-radius: 3px; outline: 1px solid #c8983a; outline-offset: -1px; }
.pv {
  width: 60px;
  height: 34px;
  line-height: 36px;
  overflow: hidden;
  text-align: left;
  font-size: 12px;
  color: #000;
}
.h1 { font: 700 17px/36px "Liberation Serif", serif; color: #365f91; }
.h2 { font: 700 16px/36px "Liberation Serif", serif; color: #4f81bd; }
.ttl { font: 30px/32px "Liberation Serif", serif; color: #17365d; }
.sub { font: italic 15px/36px "Liberation Serif", serif; color: #4f81bd; }
.soft { font-style: italic; color: #808080; }
.gscroll { width: 14px; display: flex; flex-direction: column; }
.gscroll button {
  flex: 1;
  display: grid;
  place-items: center;
  align-content: center;
  gap: 2px;
  border-left: 1px solid #c6c9ce;
  border-bottom: 1px solid #c6c9ce;
  background: #f8f9fb;
}
.gscroll button:last-child { border-bottom: 0; }
.gscroll button:disabled { opacity: .5; }
.change { width: 56px; }
.two .arr { margin-bottom: 2px; }
.edit .body { padding-left: 8px; }
.edit .line { gap: 3px; }
.mark {
  position: absolute;
  left: 0;
  top: -2px;
  width: 60px;
  height: 88px;
  border: 5px solid #ed1c24;
  border-radius: 14px;
}

/* document area */
.workspace {
  position: relative;
  display: flex;
  justify-content: space-between;
  background: linear-gradient(#cdd0d5, #b9bcc1);
  box-shadow: inset 0 3px 3px -2px #9a9da3;
  overflow: hidden;
}
.paper {
  width: 554px;
  min-height: 553px;
  margin: 19px 0 0 116px;
  background: #fff;
  box-shadow: 0 0 0 1px #a3a9b3, 1px 1px 10px 2px #83878e;
}
.note {
  position: absolute;
  left: 12px;
  top: 4px;
  margin: 0;
  font: 700 28px/36px Lato, "Open Sans", sans-serif;
  font-variant-ligatures: none;
  color: #ed1c24;
}
.vscroll {
  width: 17px;
  margin-top: 3px;
  display: flex;
  flex-direction: column;
  align-items: stretch;
  background: linear-gradient(to right, #d5dae1, #e0e5ec);
}
.splitter { height: 2px; margin: 2px 4px 0; background: #777b82; }
.vb { height: 17px; display: grid; place-items: center; }
.vb svg { width: 8px; height: 8px; }
.vb .i14 { width: 13px; height: 13px; }
.ruler { height: 19px; border-bottom: 1px solid #b5b9c0; }
.tri { border: 5px solid transparent; border-top-color: #45484d; border-bottom: 0; }
.tri.flip { transform: rotate(180deg); }
.thumb {
  height: 322px;
  margin-right: 1px;
  display: grid;
  place-items: center;
  border: 1px solid #828b98;
  border-radius: 1px;
  background: linear-gradient(to right, #f3f5f9, #e3e6ec 50%, #cfd4dc);
}
.grip { width: 8px; height: 7px; background: repeating-linear-gradient(#80848b 0 1px, #f4f4f6 1px 2px); }
.nav.first { border-top: 1px solid #b5b9c0; }

/* status bar */
.status {
  display: flex;
  align-items: center;
  height: 22px;
  padding: 0 4px 1px 0;
  color: #333;
  background: linear-gradient(#e3e6ea, #cdd0d5 60%, #bcc0c5);
  border-top: 1px solid #8b9096;
}
.cell { padding: 2px 8px; border-right: 1px solid #8f9499; box-shadow: 1px 0 #eef0f2; margin-right: 1px; }
.empty { height: 18px; padding: 0; margin-right: 3px; }
.view { width: 18px; height: 19px; display: grid; place-items: center; }
.pct { padding: 0 8px 0 11px; }
.zb { width: 16px; }
.zoom {
  appearance: none;
  width: 100px;
  height: 16px;
  margin: 0;
  background:
    linear-gradient(#777, #777) 50% 50% / 1px 7px no-repeat,
    linear-gradient(#777, #777) 0 50% / 100% 1px no-repeat;
}
.zoom::-webkit-slider-thumb {
  appearance: none;
  width: 9px;
  height: 12px;
  border: 1px solid #555;
  border-radius: 2px 2px 5px 5px;
  background: #f5f6f8;
}

/* taskbar */
.taskbar {
  display: flex;
  align-items: center;
  height: 40px;
  color: #fff;
  background: linear-gradient(#101318 0 1px, #59626c 1px 2px, #1c242f 2px, #080e14 8px, #070b10);
}
.slot { width: 62px; height: 40px; display: flex; align-items: center; justify-content: center; }
.start { width: 57px; padding-right: 2px; }
.running {
  height: 38px;
  display: grid;
  place-items: center;
  border: 1px solid #a8adb2;
  border-radius: 3px;
}
.ie { width: 50px; background: linear-gradient(160deg, #8f9499, #4a4f55 45%, #17191c 55%, #3c4045); }
.word { width: 58px; margin-left: 2px; background: linear-gradient(160deg, #c3c6c9, #8b8e92 45%, #6e7174 55%, #a3a6a9); }
.pile { width: 3px; height: 38px; border-right: 1px solid #555b62; }
.lang { width: 36px; padding: 0 0 4px 6px; }
.tray { display: flex; gap: 8px; padding: 0 4px 0 0; }
.clock { width: 80px; display: flex; flex-direction: column; align-items: center; line-height: 17px; }
.peek { width: 13px; height: 38px; margin-right: 1px; border: 1px solid #5c6269; background: linear-gradient(135deg, #4a4e52, #0b0e11 60%); }
```
